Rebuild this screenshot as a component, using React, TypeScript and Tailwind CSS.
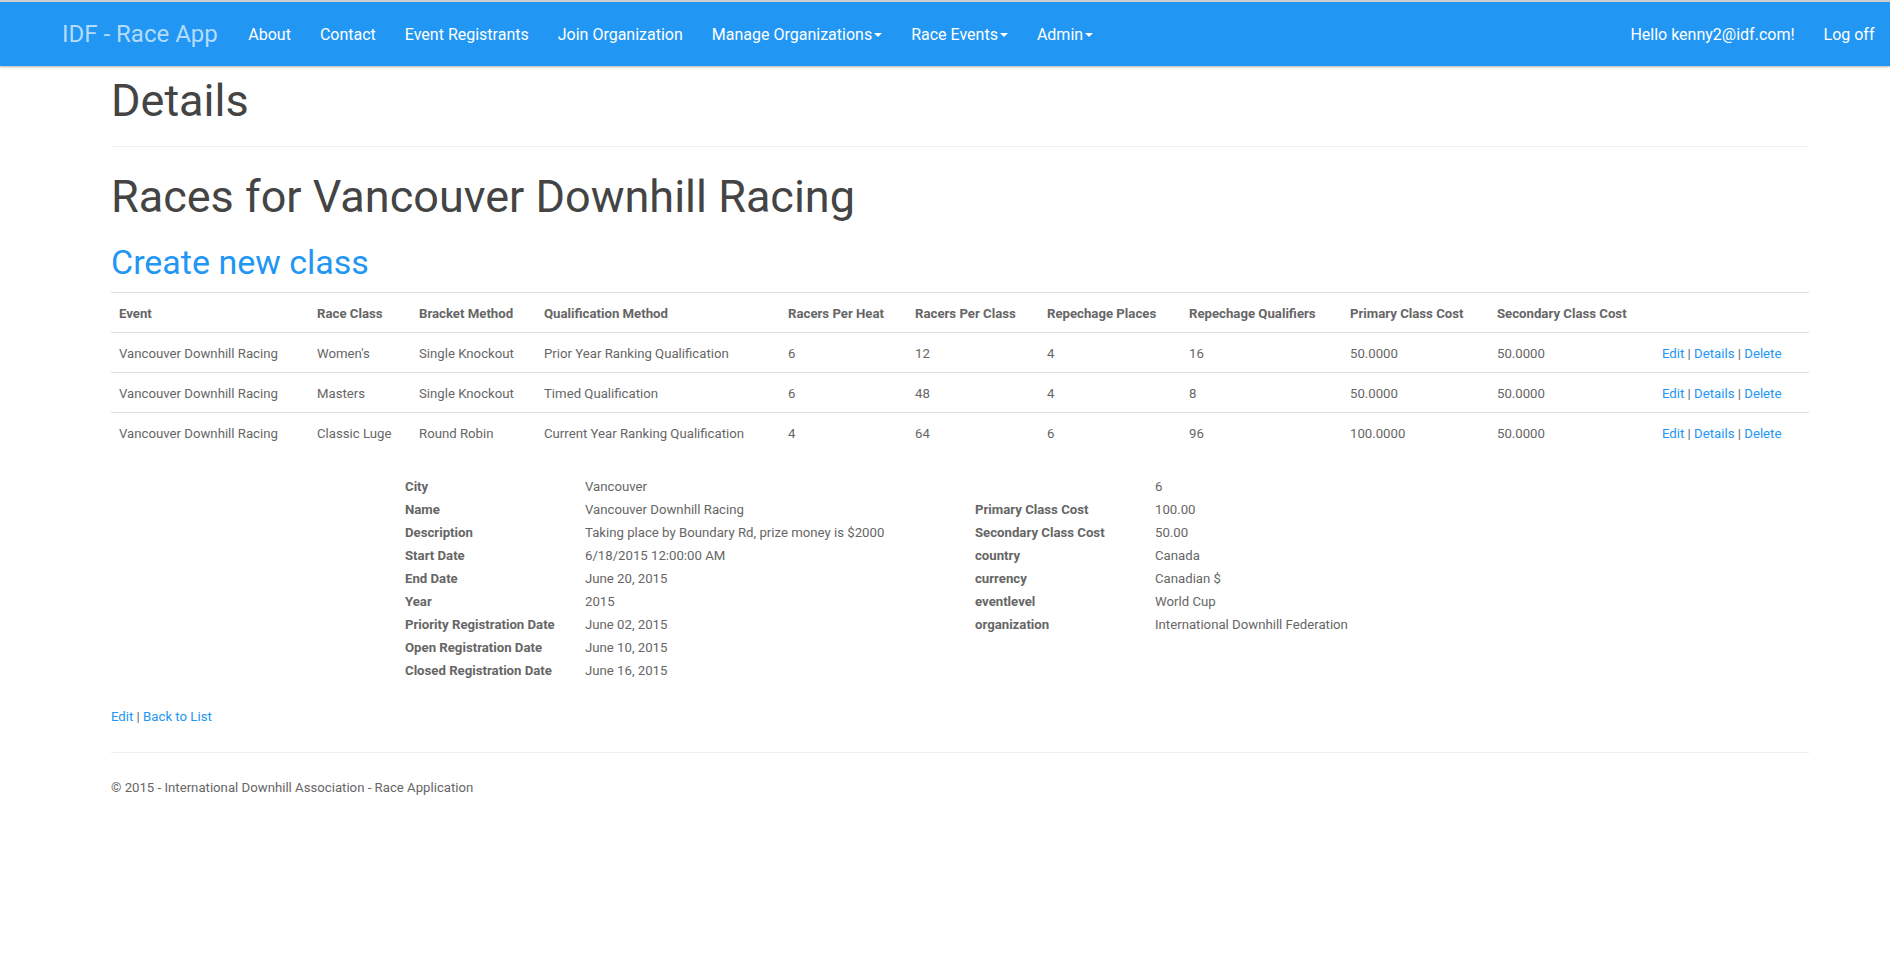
import React from 'react';

interface RaceRow {
    event: string;
    raceClass: string;
    bracket: string;
    qualification: string;
    perHeat: string;
    perClass: string;
    repPlaces: string;
    repQualifiers: string;
    primaryCost: string;
    secondaryCost: string;
}

const rows: RaceRow[] = [
    { event: 'Vancouver Downhill Racing', raceClass: "Women's", bracket: 'Single Knockout', qualification: 'Prior Year Ranking Qualification', perHeat: '6', perClass: '12', repPlaces: '4', repQualifiers: '16', primaryCost: '50.0000', secondaryCost: '50.0000' },
    { event: 'Vancouver Downhill Racing', raceClass: 'Masters', bracket: 'Single Knockout', qualification: 'Timed Qualification', perHeat: '6', perClass: '48', repPlaces: '4', repQualifiers: '8', primaryCost: '50.0000', secondaryCost: '50.0000' },
    { event: 'Vancouver Downhill Racing', raceClass: 'Classic Luge', bracket: 'Round Robin', qualification: 'Current Year Ranking Qualification', perHeat: '4', perClass: '64', repPlaces: '6', repQualifiers: '96', primaryCost: '100.0000', secondaryCost: '50.0000' },
];

const headers = [
    'Event', 'Race Class', 'Bracket Method', 'Qualification Method', 'Racers Per Heat',
    'Racers Per Class', 'Repechage Places', 'Repechage Qualifiers', 'Primary Class Cost', 'Secondary Class Cost', '',
];

const colWidths = ['w-[198px]', 'w-[102px]', 'w-[125px]', 'w-[244px]', 'w-[127px]', 'w-[132px]', 'w-[142px]', 'w-[161px]', 'w-[147px]', 'w-[165px]', 'w-[155px]'];

const leftDetails: [string, string][] = [
    ['City', 'Vancouver'],
    ['Name', 'Vancouver Downhill Racing'],
    ['Description', 'Taking place by Boundary Rd, prize money is $2000'],
    ['Start Date', '6/18/2015 12:00:00 AM'],
    ['End Date', 'June 20, 2015'],
    ['Year', '2015'],
    ['Priority Registration Date', 'June 02, 2015'],
    ['Open Registration Date', 'June 10, 2015'],
    ['Closed Registration Date', 'June 16, 2015'],
];

const rightDetails: [string, string][] = [
    ['', '6'],
    ['Primary Class Cost', '100.00'],
    ['Secondary Class Cost', '50.00'],
    ['country', 'Canada'],
    ['currency', 'Canadian $'],
    ['eventlevel', 'World Cup'],
    ['organization', 'International Downhill Federation'],
];

const Caret = () => (
    <span className="inline-block w-0 h-0 ml-[2px] align-middle border-x-4 border-x-transparent border-t-4 border-t-white" />
);

const NavLink = ({ label, dropdown }: { label: string; dropdown?: boolean }) => (
    <a href="#" className="px-[14.5px] text-white text-[16px] leading-[21px] whitespace-nowrap">
        {label}
        {dropdown && <Caret />}
    </a>
);

const DetailList = ({ items }: { items: [string, string][] }) => (
    <dl className="w-[570px] grid grid-cols-[180px_1fr] content-start text-[13.2px] leading-[23px]">
        {items.map(([k, v], i) => (
            <React.Fragment key={i}>
                <dt className="font-bold whitespace-nowrap h-[23px]">{k}</dt>
                <dd className="h-[23px]">{v}</dd>
            </React.Fragment>
        ))}
    </dl>
);

const ActionLinks = () => (
    <span>
        <a href="#" className="text-[#2196f3]">Edit</a> | <a href="#" className="text-[#2196f3]">Details</a> | <a href="#" className="text-[#2196f3]">Delete</a>
    </span>
);

export default function App() {
    return (
        <div className="min-h-[955px] bg-white font-['Roboto','Liberation_Sans',sans-serif] text-[#666] text-[13.2px]">
            <nav className="border-t-2 border-[#cfcfcf] bg-[#2196f3] h-[66px] flex items-center justify-between shadow-[0_1px_2px_rgba(0,0,0,0.3)] relative z-10">
                <div className="flex items-center">
                    <a href="#" className="pl-[62px] pr-[16px] text-[24px] leading-[26px] text-[#b3dcfc] whitespace-nowrap">IDF - Race App</a>
                    <NavLink label="About" />
                    <NavLink label="Contact" />
                    <NavLink label="Event Registrants" />
                    <NavLink label="Join Organization" />
                    <NavLink label="Manage Organizations" dropdown />
                    <NavLink label="Race Events" dropdown />
                    <NavLink label="Admin" dropdown />
                </div>
                <div className="flex items-center pr-[1px]">
                    <NavLink label="Hello kenny2@idf.com!" />
                    <NavLink label="Log off" />
                </div>
            </nav>

            <main className="ml-[111px] w-[1698px]">
                <h2 className="mt-[10px] text-[45px] leading-[50px] text-[#444]">Details</h2>
                <hr className="mt-[20px] border-t border-[#eee]" />
                <h2 className="mt-[25px] text-[45px] leading-[50px] text-[#444]">Races for Vancouver Downhill Racing</h2>
                <h3 className="mt-[22px] text-[34px] leading-[37px]">
                    <a href="#" className="text-[#2196f3]">Create new class</a>
                </h3>

                <table className="mt-[11px] w-full table-fixed border-collapse">
                    <colgroup>
                        {colWidths.map((w, i) => (
                            <col key={i} className={w} />
                        ))}
                    </colgroup>
                    <thead>
                        <tr className="border-y border-[#ddd] h-[40px]">
                            {headers.map((h, i) => (
                                <th key={i} className="px-2 pt-[2px] text-left font-bold whitespace-nowrap">{h}</th>
                            ))}
                        </tr>
                    </thead>
                    <tbody>
                        {rows.map((r, i) => (
                            <tr key={i} className={`h-[40px] ${i > 0 ? 'border-t border-[#ddd]' : ''}`}>
                                <td className="px-2 pt-[2px] whitespace-nowrap">{r.event}</td>
                                <td className="px-2 pt-[2px] whitespace-nowrap">{r.raceClass}</td>
                                <td className="px-2 pt-[2px] whitespace-nowrap">{r.bracket}</td>
                                <td className="px-2 pt-[2px] whitespace-nowrap">{r.qualification}</td>
                                <td className="px-2 pt-[2px]">{r.perHeat}</td>
                                <td className="px-2 pt-[2px]">{r.perClass}</td>
                                <td className="px-2 pt-[2px]">{r.repPlaces}</td>
                                <td className="px-2 pt-[2px]">{r.repQualifiers}</td>
                                <td className="px-2 pt-[2px]">{r.primaryCost}</td>
                                <td className="px-2 pt-[2px]">{r.secondaryCost}</td>
                                <td className="px-2 pt-[2px] whitespace-nowrap"><ActionLinks /></td>
                            </tr>
                        ))}
                    </tbody>
                </table>

                <div className="mt-[22px] pl-[294px] flex items-start">
                    <DetailList items={leftDetails} />
                    <DetailList items={rightDetails} />
                </div>

                <p className="mt-[23px] leading-[24px]">
                    <a href="#" className="text-[#2196f3]">Edit</a> | <a href="#" className="text-[#2196f3]">Back to List</a>
                </p>

                <hr className="mt-[23px] border-t border-[#eee]" />
                <footer className="mt-[23px] leading-[24px]">
                    <p>© 2015 - International Downhill Association - Race Application</p>
                </footer>
            </main>
        </div>
    );
}
